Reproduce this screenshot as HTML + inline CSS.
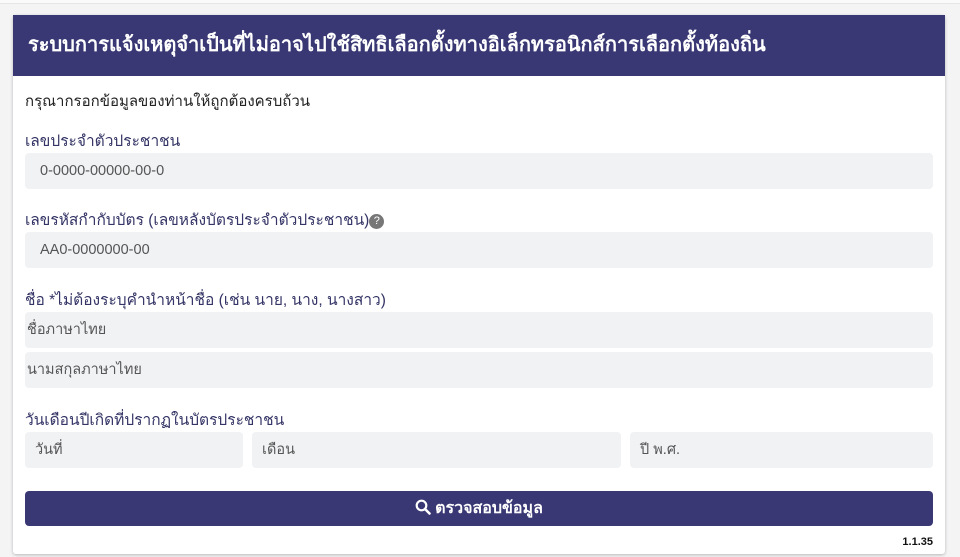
<!DOCTYPE html>
<html><head><meta charset="utf-8"><style>
*{box-sizing:border-box;margin:0;padding:0}
body{width:960px;height:557px;background:#f4f4f5;font-family:"Liberation Sans",sans-serif;position:relative;overflow:hidden}
.top{position:absolute;left:0;top:0;width:960px;height:4px;background:#fafafa;border-bottom:1px solid #e6e6e6}
.card{position:absolute;left:13px;top:15px;width:932px;height:539px;background:#fff;box-shadow:0 1px 3px rgba(0,0,0,.25);border-radius:3px}
.hd{position:absolute;left:0;top:0;width:932px;height:61px;background:#393874;color:#fff;font-size:20px;line-height:61px;padding-left:15px;font-weight:bold}
.t{position:absolute;left:12px;font-size:15px;color:#222}
.l{color:#343466;font-size:15.5px}
.in{position:absolute;background:#f1f2f4;border-radius:4px;font-size:14.5px;color:#555;padding-left:15px;height:36px;line-height:36px}
.btn{position:absolute;left:12px;top:476px;width:908px;height:35px;background:#393874;border-radius:4px;color:#fff;font-size:16px;text-align:center;line-height:35px;font-weight:bold}
.v{position:absolute;right:12px;top:521px;font-size:11px;color:#111;font-weight:bold}
.q{display:inline-block;width:15px;height:15px;border-radius:50%;background:#777;color:#fff;font-size:11px;line-height:15px;text-align:center;vertical-align:1px}
</style></head><body>
<div class="top"></div>
<div class="card">
<div class="hd">ระบบการแจ้งเหตุจำเป็นที่ไม่อาจไปใช้สิทธิเลือกตั้งทางอิเล็กทรอนิกส์การเลือกตั้งท้องถิ่น</div>
<div class="t" style="top:74px">กรุณากรอกข้อมูลของท่านให้ถูกต้องครบถ้วน</div>
<div class="t l" style="top:113px">เลขประจำตัวประชาชน</div>
<div class="in" style="left:12px;top:138px;width:908px">0-0000-00000-00-0</div>
<div class="t l" style="top:192px">เลขรหัสกำกับบัตร (เลขหลังบัตรประจำตัวประชาชน)<span class="q">?</span></div>
<div class="in" style="left:12px;top:217px;width:908px">AA0-0000000-00</div>
<div class="t l" style="top:272px">ชื่อ *ไม่ต้องระบุคำนำหน้าชื่อ (เช่น นาย, นาง, นางสาว)</div>
<div class="in" style="left:12px;top:297px;width:908px;padding-left:2px">ชื่อภาษาไทย</div>
<div class="in" style="left:12px;top:337px;width:908px;padding-left:2px">นามสกุลภาษาไทย</div>
<div class="t l" style="top:392px">วันเดือนปีเกิดที่ปรากฏในบัตรประชาชน</div>
<div class="in" style="left:12px;top:417px;width:218px;padding-left:10px">วันที่</div>
<div class="in" style="left:239px;top:417px;width:369px;padding-left:10px">เดือน</div>
<div class="in" style="left:617px;top:417px;width:303px;padding-left:10px">ปี พ.ศ.</div>
<div class="btn"><svg width="16" height="16" viewBox="0 0 16 16" style="vertical-align:-2px;margin-right:4px"><circle cx="6.5" cy="6.5" r="4.8" fill="none" stroke="#fff" stroke-width="2.2"/><path d="M10 10l4.5 4.5" stroke="#fff" stroke-width="2.6" stroke-linecap="round"/></svg>ตรวจสอบข้อมูล</div>
<div class="v">1.1.35</div>
</div>
</body></html>
